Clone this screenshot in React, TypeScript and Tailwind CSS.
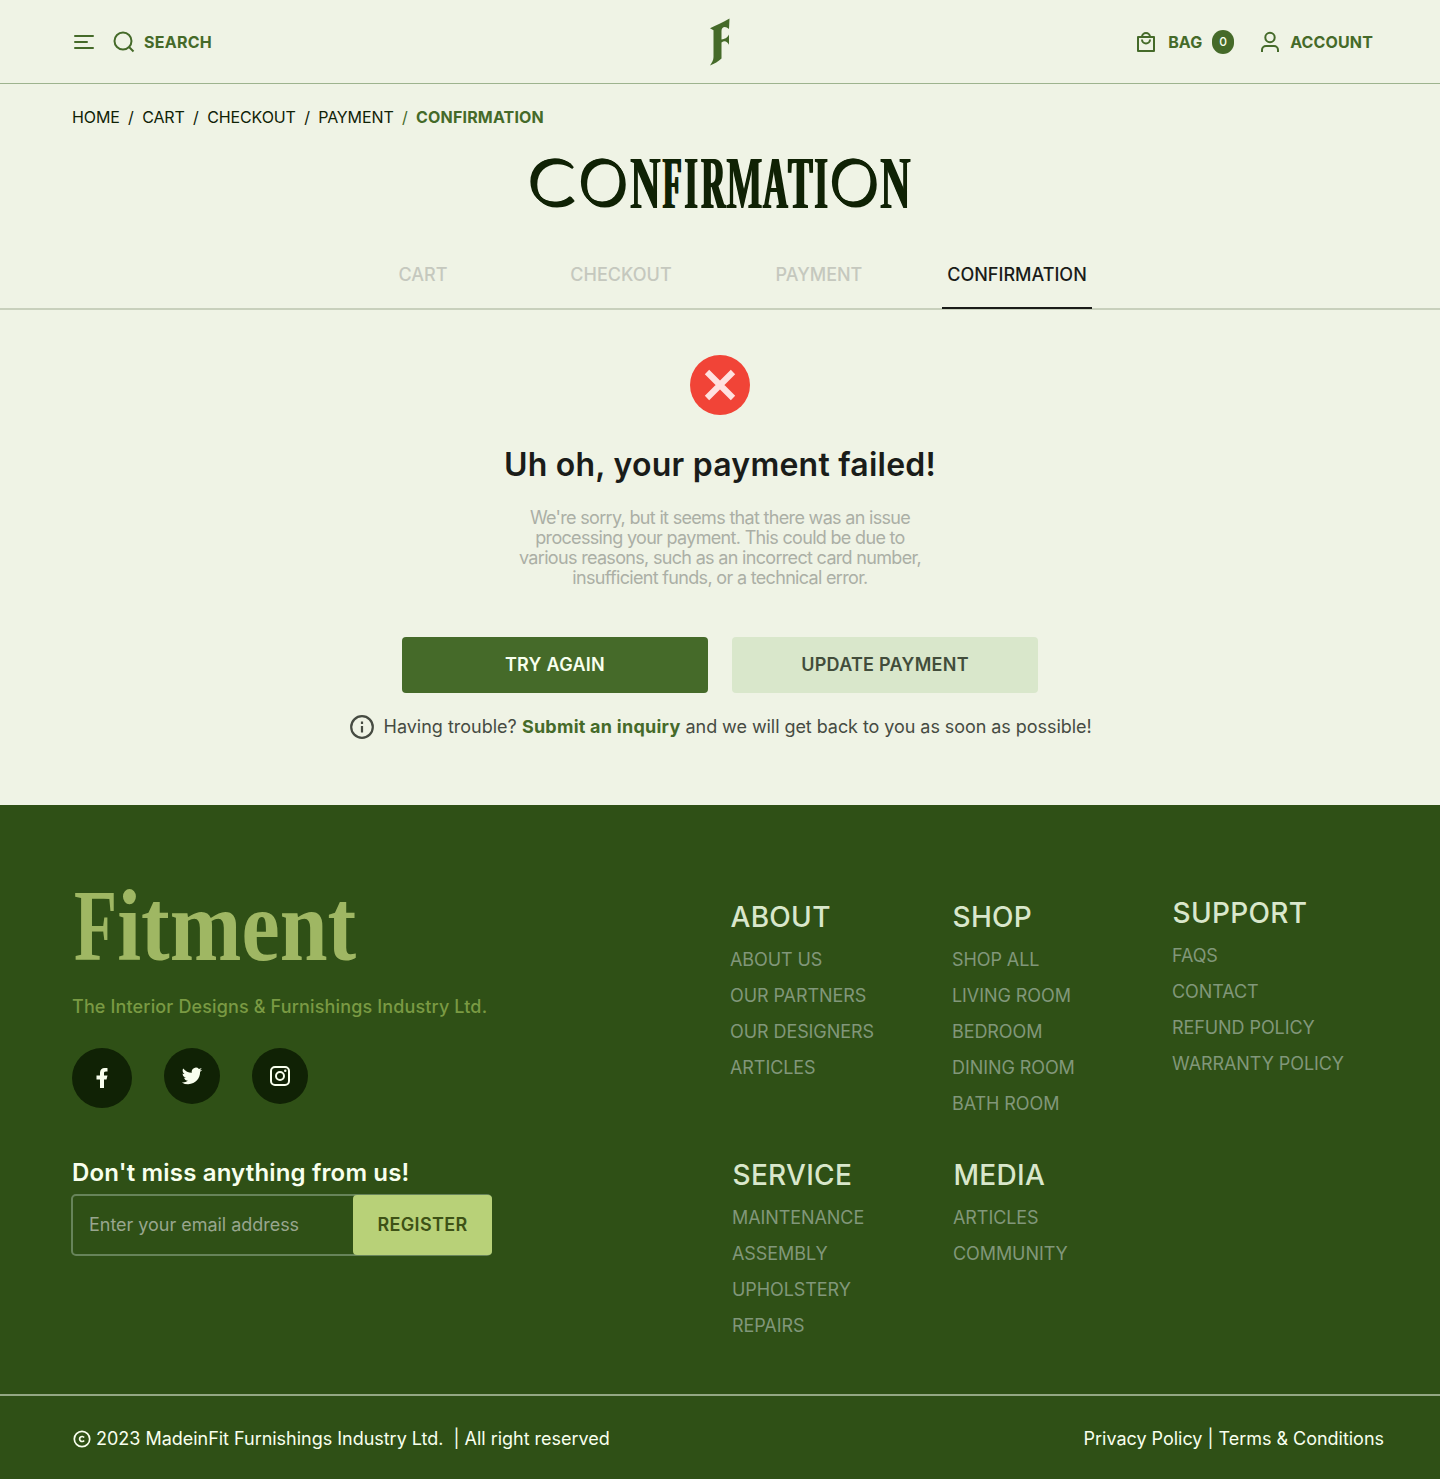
import React from "react";

type Glyph = { ch: string; box: string; inner: string };

// Wide round letters alternate with narrow upright ones in the display title.
const TITLE: Glyph[] = [
  { ch: "C", box: "w-[50px]", inner: "-ml-[2px] leading-[65px] font-[Lato,sans-serif] text-[64px] font-light scale-x-[1.1] [text-shadow:-1.5px_-1.5px,-0.75px_-0.75px,0.75px_0.75px,1.5px_1.5px]" },
  { ch: "O", box: "w-[50px]", inner: "leading-[65px] font-[Lato,sans-serif] text-[64px] font-light scale-x-[0.97] [text-shadow:-1.5px_-1.5px,-0.75px_-0.75px,0.75px_0.75px,1.5px_1.5px]" },
  { ch: "N", box: "w-[34px]", inner: "leading-[72px] scale-x-[0.57] font-bold [text-shadow:1px_0,-1px_0]" },
  { ch: "F", box: "w-[21px]", inner: "leading-[72px] scale-x-[0.42] font-bold [text-shadow:2px_0,-2px_0]" },
  { ch: "I", box: "w-[17px]", inner: "leading-[72px] scale-x-[0.46] font-bold [text-shadow:2px_0,-2px_0]" },
  { ch: "R", box: "w-[26px]", inner: "leading-[72px] scale-x-[0.45] font-bold [text-shadow:2px_0,-2px_0]" },
  { ch: "M", box: "w-[37px]", inner: "leading-[72px] scale-x-[0.52] font-bold [text-shadow:1px_0,-1px_0]" },
  { ch: "A", box: "w-[24px]", inner: "leading-[72px] scale-x-[0.46] font-bold [text-shadow:2px_0,-2px_0]" },
  { ch: "T", box: "w-[26px]", inner: "leading-[72px] scale-x-[0.5] font-bold [text-shadow:2px_0,-2px_0]" },
  { ch: "I", box: "w-[16px]", inner: "leading-[72px] scale-x-[0.46] font-bold [text-shadow:2px_0,-2px_0]" },
  { ch: "O", box: "w-[50px]", inner: "leading-[65px] font-[Lato,sans-serif] text-[64px] font-light scale-x-[0.97] [text-shadow:-1.5px_-1.5px,-0.75px_-0.75px,0.75px_0.75px,1.5px_1.5px]" },
  { ch: "N", box: "w-[32px]", inner: "leading-[72px] scale-x-[0.57] font-bold [text-shadow:1px_0,-1px_0]" },
];

function DisplayTitle() {
  return (
    <h1 aria-label="CONFIRMATION" className="mx-auto flex h-[72px] w-[384px] font-['Liberation_Serif',serif] text-[73px] text-[#102205]">
      {TITLE.map((g, i) => (
        <span key={i} className={`flex h-[72px] shrink-0 justify-center ${g.box}`}>
          <span className={`block h-[72px] shrink-0 origin-center ${g.inner}`}>{g.ch}</span>
        </span>
      ))}
    </h1>
  );
}

function LogoMark() {
  return (
    <svg width="22" height="50" viewBox="0 0 22 50" fill="#456a29">
      <path d="M20.500 1.500C14 5.500 7 8.200 1 11.200L4.500 13.200V40C4.500 43 3 45.500 1 48.500C5.500 46.500 9.500 44.500 12.500 41.500V25.500C15.500 23 18 24 20 27.800V17.500C18 21 16 22 12.500 22.500V14C12.500 9.500 16.500 8.500 20 12Z" />
    </svg>
  );
}

function LinkGroup({ title, links, className }: { title: string; links: string[]; className: string }) {
  return (
    <div className={className}>
      <h3 className="ml-[0.5px] text-[28px] leading-9 font-medium tracking-[0.3px] text-[#d9e7cb]">{title}</h3>
      <ul className="mt-[7px] text-[18px] leading-9 tracking-[-0.08px] text-[#81977a]">
        {links.map((l) => (
          <li key={l}>{l}</li>
        ))}
      </ul>
    </div>
  );
}

export default function App() {
  return (
    <div className="flex h-[1479px] w-[1440px] flex-col overflow-hidden bg-[#eff3e5] font-[Inter,sans-serif] text-[#1a1c19]">
      <header className="flex h-[84px] shrink-0 items-center justify-between border-b border-[#9db38e] pr-[67px] pl-[72px] text-[#456a29]">
        <div className="flex w-[495px] items-center">
          <svg width="24" height="24" viewBox="0 0 24 24" fill="none" stroke="currentColor" strokeWidth="2" strokeLinecap="round">
            <path d="M3 6h18M3 12h12M3 18h18" />
          </svg>
          <svg className="ml-4" width="24" height="24" viewBox="0 0 24 24" fill="none" stroke="currentColor" strokeWidth="2">
            <circle cx="11" cy="11" r="8.500" />
            <path d="M17 17l4.500 4.500" />
          </svg>
          <span className="ml-2 text-base font-bold tracking-[0.25px]">SEARCH</span>
        </div>
        <LogoMark />
        <div className="flex w-[500px] items-center justify-end">
          <svg width="24" height="24" viewBox="0 0 24 24" fill="none" stroke="currentColor" strokeWidth="2">
            <path strokeLinejoin="round" d="M4 7h16v14H4z" />
            <path d="M8 7a4 4 0 0 1 8 0M8 9.500a4 4 0 0 0 8 0" />
          </svg>
          <span className="ml-[10px] text-base font-bold">BAG</span>
          <span className="ml-[10px] flex h-6 w-[22px] items-center justify-center rounded-full bg-[#456a29] text-xs font-medium text-[#f8ffee]">0</span>
          <svg className="ml-6" width="24" height="24" viewBox="0 0 24 24" fill="none" stroke="currentColor" strokeWidth="2">
            <circle cx="12" cy="7.500" r="4.700" />
            <path d="M4 22v-2a4 4 0 0 1 4-4h8a4 4 0 0 1 4 4v2" />
          </svg>
          <span className="ml-2 text-base font-bold tracking-[0.14px]">ACCOUNT</span>
        </div>
      </header>

      <nav className="mt-[21px] flex h-6 shrink-0 items-center pl-[72px] text-base tracking-[-0.12px] text-[#102205] [word-spacing:-0.18px]">
        <span className="whitespace-pre">HOME  /  CART  /  CHECKOUT  /  PAYMENT  </span>
        <span className="whitespace-pre text-[#456a29]">/  </span>
        <span className="font-bold tracking-[0.17px] text-[#456a29]">CONFIRMATION</span>
      </nav>

      <div className="mt-[19px] shrink-0">
        <DisplayTitle />
      </div>

      <div className="flex h-[90px] shrink-0 justify-center border-b-2 border-[#c8d0bc] text-[18px] leading-6 font-medium text-[#c5c8be]">
        <div className="flex pt-[43px]">
          <span className="w-[150px] text-center">CART</span>
          <span className="ml-12 w-[150px] text-center">CHECKOUT</span>
          <span className="ml-12 w-[150px] text-center">PAYMENT</span>
          <span className="ml-12 h-[46px] w-[150px] border-b-2 border-[#1a1c19] text-center text-[#1a1c19]">CONFIRMATION</span>
        </div>
      </div>

      <main className="flex shrink-0 flex-col items-center">
        <svg className="mt-[45px]" width="60" height="60" viewBox="0 0 60 60">
          <circle cx="30" cy="30" r="30" fill="#f14437" />
          <path d="M17 17l26 26M43 17L17 43" stroke="#ffe1df" strokeWidth="6.200" />
        </svg>
        <h2 className="mt-[30px] text-[32px] leading-10 font-semibold tracking-[0.24px] whitespace-nowrap">Uh oh, your payment failed!</h2>
        <p className="mt-[23px] text-center text-[18px] leading-5 tracking-[-0.68px] whitespace-nowrap text-[#abafa5]">
          We're sorry, but it seems that there was an issue
          <br />
          processing your payment. This could be due to
          <br />
          various reasons, such as an incorrect card number,
          <br />
          insufficient funds, or a technical error.
        </p>
        <div className="mt-[49px] flex gap-6 text-[18px] font-semibold tracking-[0.28px]">
          <button className="h-14 w-[306px] rounded bg-[#456a29] pb-px text-[#f8ffee]">TRY AGAIN</button>
          <button className="h-14 w-[306px] rounded bg-[#d9e7cb] pb-px text-[#424d3b]">UPDATE PAYMENT</button>
        </div>
        <div className="mt-5 flex items-center text-[18px] leading-7 whitespace-nowrap text-[#464b42]">
          <svg width="26" height="26" viewBox="0 0 26 26" fill="none" stroke="currentColor" strokeWidth="2.200">
            <circle cx="13" cy="13" r="10.800" />
            <path d="M13 12v6.500M13 7.500v2.400" />
          </svg>
          <span className="ml-[9px]">
            Having trouble? <b className="tracking-[0.25px] text-[#456a29]">Submit an inquiry</b>
            <span className="tracking-[-0.06px]"> and we will get back to you as soon as possible!</span>
          </span>
        </div>
      </main>

      <footer className="mt-auto flex h-[674px] shrink-0 flex-col bg-[#2f5016]">
        <div className="flex h-[589px] pl-[72px]">
          <div className="w-[658px] shrink-0">
            <div className="mt-[66px] ml-[2px] flex h-[110px] w-max origin-left scale-x-[0.852] font-['Liberation_Serif',serif] text-[101px] leading-[110px] font-bold text-[#9fb763]">
              <span className="mr-[-11px] block origin-left scale-x-[0.82]">F</span>
              <span>itment</span>
            </div>
            <p className="mt-3 text-[18px] leading-7 font-medium tracking-[0.14px] text-[#7a9a43]">The Interior Designs &amp; Furnishings Industry Ltd.</p>
            <div className="mt-[27px] flex h-[60px] items-start gap-8 text-[#f8ffee]">
              <span className="flex size-[60px] items-center justify-center rounded-full bg-[#102205]">
                <svg width="24" height="24" viewBox="0 0 24 24" fill="currentColor">
                  <path d="M14 13.500h2.500l1-4H14v-2c0-1.030 0-2 2-2h1.500V2.140c-.326-.043-1.557-.14-2.857-.14C11.928 2 10 3.657 10 6.700v2.800H6.500v4H10V22h4z" />
                </svg>
              </span>
              <span className="flex size-14 items-center justify-center rounded-full bg-[#102205]">
                <svg width="24" height="24" viewBox="0 0 24 24" fill="currentColor">
                  <path d="M22.162 5.656a8.384 8.384 0 0 1-2.402.658A4.196 4.196 0 0 0 21.600 4c-.82.488-1.719.83-2.656 1.015a4.182 4.182 0 0 0-7.126 3.814 11.874 11.874 0 0 1-8.620-4.370 4.168 4.168 0 0 0-.566 2.103c0 1.450.738 2.731 1.860 3.481a4.168 4.168 0 0 1-1.894-.523v.052a4.185 4.185 0 0 0 3.355 4.101 4.210 4.210 0 0 1-1.890.072A4.185 4.185 0 0 0 7.970 16.650a8.394 8.394 0 0 1-6.191 1.732 11.830 11.830 0 0 0 6.410 1.880c7.693 0 11.900-6.373 11.900-11.900 0-.18-.005-.362-.013-.540a8.496 8.496 0 0 0 2.087-2.165z" />
                </svg>
              </span>
              <span className="flex size-14 items-center justify-center rounded-full bg-[#102205]">
                <svg width="24" height="24" viewBox="0 0 24 24" fill="none" stroke="currentColor" strokeWidth="2">
                  <rect x="3" y="3" width="18" height="18" rx="4" />
                  <circle cx="12" cy="12" r="4" />
                  <circle cx="17.250" cy="6.750" r="1.250" fill="currentColor" stroke="none" />
                </svg>
              </span>
            </div>
            <p className="mt-[49px] text-[24px] leading-8 font-semibold tracking-[0.16px] text-[#f8ffee]">Don't miss anything from us!</p>
            <div className="mt-[5px] -ml-px flex h-[62px] w-[421px] rounded-[5px] border-2 border-[#67845a]">
              <span className="flex-1 pl-[16px] text-[18px] leading-[58px] tracking-[-0.03px] text-[#98a68e]">Enter your email address</span>
              <button className="-my-px -mr-[2px] h-[60px] w-[139px] rounded bg-[#b8d178] pb-px text-[18px] font-semibold tracking-[0.35px] text-[#3e5216]">REGISTER</button>
            </div>
          </div>
          <div>
            <div className="flex h-[258px] pt-[94px]">
              <LinkGroup className="w-[222px]" title="ABOUT" links={["ABOUT US", "OUR PARTNERS", "OUR DESIGNERS", "ARTICLES"]} />
              <LinkGroup className="w-[220px]" title="SHOP" links={["SHOP ALL", "LIVING ROOM", "BEDROOM", "DINING ROOM", "BATH ROOM"]} />
              <LinkGroup className="-mt-1" title="SUPPORT" links={["FAQS", "CONTACT", "REFUND POLICY", "WARRANTY POLICY"]} />
            </div>
            <div className="flex pt-[94px] pl-[2px]">
              <LinkGroup className="w-[221px]" title="SERVICE" links={["MAINTENANCE", "ASSEMBLY", "UPHOLSTERY", "REPAIRS"]} />
              <LinkGroup className="" title="MEDIA" links={["ARTICLES", "COMMUNITY"]} />
            </div>
          </div>
        </div>
        <div className="flex h-[85px] items-center justify-between border-t-2 border-[#94a884] pr-[56px] pl-[72px] text-[18px] tracking-[-0.02px] text-[#f8ffee]">
          <div className="flex items-center pt-px">
            <svg className="mt-px" width="20" height="20" viewBox="0 0 20 20" fill="none" stroke="currentColor" strokeWidth="1.700">
              <circle cx="10" cy="10" r="7.700" />
              <path d="M12.100 8.500a2.500 2.500 0 1 0 0 3" />
            </svg>
            <span className="ml-1 whitespace-pre">2023 MadeinFit Furnishings Industry Ltd.  | All right reserved</span>
          </div>
          <span className="pt-px">Privacy Policy | Terms &amp; Conditions</span>
        </div>
      </footer>
    </div>
  );
}
